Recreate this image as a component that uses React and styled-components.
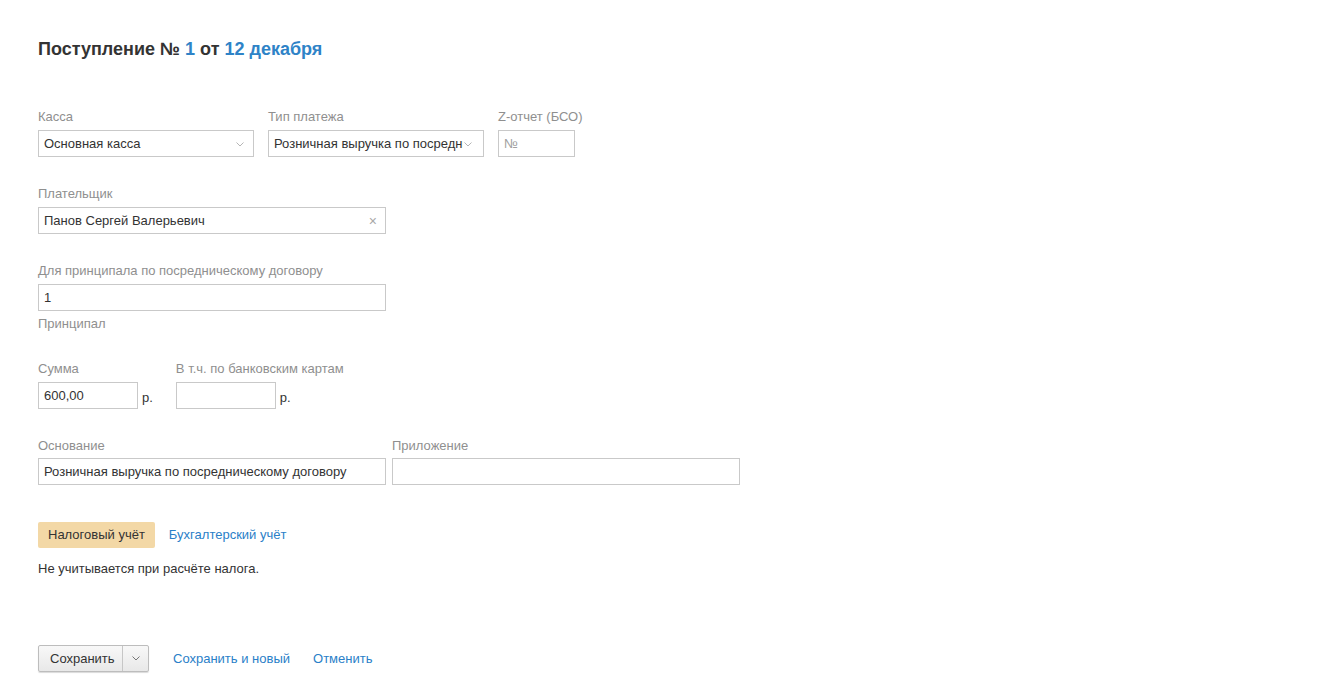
import React from "react";
import styled, { createGlobalStyle } from "styled-components";

const Global = createGlobalStyle`
  html, body { margin: 0; padding: 0; background: #fff; }
  body { font-family: "Liberation Sans", Arial, sans-serif; font-size: 13px; color: #333; }
  * { box-sizing: border-box; }
`;

const Page = styled.div`
  padding: 39px 38px 20px;
  display: flex;
  flex-direction: column;
`;

const Title = styled.h1`
  margin: 0 0 50px;
  font-size: 18px;
  line-height: 20px;
  font-weight: bold;
  color: #333;
`;

const Accent = styled.span`
  color: #2e83c7;
`;

const Row = styled.div`
  display: flex;
  align-items: flex-start;
  gap: ${(p) => p.$gap ?? 15}px;
  margin-bottom: ${(p) => p.$mb ?? 29}px;
`;

const Field = styled.div`
  display: flex;
  flex-direction: column;
  width: ${(p) => (p.$w ? `${p.$w}px` : "auto")};
  flex-shrink: 0;
`;

const Label = styled.div`
  color: #8f8f8f;
  font-size: 13px;
  line-height: 16px;
  margin-bottom: ${(p) => p.$mb ?? 5}px;
  white-space: nowrap;
`;

const Box = styled.div`
  position: relative;
  flex-shrink: 0;
  height: 27px;
  width: ${(p) => (p.$w ? `${p.$w}px` : "100%")};
  border: 1px solid #c9c9c9;
  background: #fff;
  display: flex;
  align-items: center;
  padding: 0 ${(p) => p.$pr ?? 5}px 0 5px;
  color: ${(p) => (p.$placeholder ? "#a0a0a0" : "#333")};
  font-size: 13px;
  white-space: nowrap;
  overflow: hidden;
`;

const BoxText = styled.span`
  flex: 1;
  overflow: hidden;
  white-space: nowrap;
`;

const Chevron = styled.svg`
  position: absolute;
  right: ${(p) => p.$r ?? 9}px;
  top: 11px;
`;

const Clear = styled.span`
  position: absolute;
  right: 8px;
  top: 5px;
  color: #a8a8a8;
  font-size: 14px;
`;

const Hint = styled.div`
  color: #8f8f8f;
  line-height: 16px;
  margin-top: 5px;
`;

const Money = styled.div`
  display: flex;
  align-items: flex-end;
  gap: 4px;
`;

const Unit = styled.span`
  line-height: 16px;
  padding-bottom: 3px;
  color: #333;
`;

const Tabs = styled.div`
  display: flex;
  align-items: center;
  gap: 14px;
  margin-top: 7px;
`;

const Tab = styled.div`
  height: 26px;
  line-height: 26px;
  padding: 0 10px;
  border-radius: 2px;
  background: ${(p) => (p.$active ? "#f3d8a6" : "transparent")};
  color: ${(p) => (p.$active ? "#333" : "#2a80c8")};
  padding-left: ${(p) => (p.$active ? 10 : 0)}px;
`;

const Note = styled.div`
  margin-top: 13px;
  line-height: 16px;
  color: #333;
`;

const Actions = styled.div`
  display: flex;
  align-items: center;
  gap: 23px;
  margin-top: 68px;
`;

const Split = styled.div`
  display: flex;
  height: 27px;
  margin-right: 1px;
  border: 1px solid #bdbdbd;
  border-radius: 2px;
  background: linear-gradient(#f8f8f8, #e8e8e8);
  box-shadow: 0 1px 1px rgba(0, 0, 0, 0.15);
`;

const MainBtn = styled.div`
  padding: 0 11px;
  line-height: 25px;
  color: #333;
  border-right: 1px solid #c6c6c6;
  width: 84px;
`;

const ArrowBtn = styled.div`
  width: 25px;
  display: flex;
  align-items: center;
  justify-content: center;
`;

const Link = styled.a`
  color: #2a80c8;
  text-decoration: none;
`;

const Down = ({ r }) => (
  <Chevron $r={r} width="8" height="5" viewBox="0 0 8 5">
    <path d="M0.5 0.5 L4 4 L7.5 0.5" fill="none" stroke="#b5b5b5" strokeWidth="1" />
  </Chevron>
);

export default function App() {
  return (
    <>
      <Global />
      <Page>
        <Title>
          Поступление № <Accent>1</Accent> от <Accent>12 декабря</Accent>
        </Title>

        <Row $gap={14}>
          <Field $w={216}>
            <Label>Касса</Label>
            <Box $pr={20}>
              <BoxText>Основная касса</BoxText>
              <Down r={9} />
            </Box>
          </Field>
          <Field $w={216}>
            <Label>Тип платежа</Label>
            <Box $pr={20}>
              <BoxText>Розничная выручка по посредническому договору</BoxText>
              <Down r={11} />
            </Box>
          </Field>
          <Field $w={77}>
            <Label>Z-отчет (БСО)</Label>
            <Box $placeholder>№</Box>
          </Field>
        </Row>

        <Row>
          <Field $w={348}>
            <Label $mb={5}>Плательщик</Label>
            <Box $pr={20}>
              <BoxText>Панов Сергей Валерьевич</BoxText>
              <Clear>×</Clear>
            </Box>
          </Field>
        </Row>

        <Row>
          <Field $w={348}>
            <Label $mb={5}>Для принципала по посредническому договору</Label>
            <Box>1</Box>
            <Hint>Принципал</Hint>
          </Field>
        </Row>

        <Row $gap={23}>
          <Field>
            <Label $mb={5}>Сумма</Label>
            <Money>
              <Box $w={100}>600,00</Box>
              <Unit>р.</Unit>
            </Money>
          </Field>
          <Field>
            <Label $mb={5}>В т.ч. по банковским картам</Label>
            <Money>
              <Box $w={100} />
              <Unit>р.</Unit>
            </Money>
          </Field>
        </Row>

        <Row $gap={6} $mb={30}>
          <Field $w={348}>
            <Label $mb={4}>Основание</Label>
            <Box>Розничная выручка по посредническому договору</Box>
          </Field>
          <Field $w={348}>
            <Label $mb={4}>Приложение</Label>
            <Box />
          </Field>
        </Row>

        <Tabs>
          <Tab $active>Налоговый учёт</Tab>
          <Tab>Бухгалтерский учёт</Tab>
        </Tabs>
        <Note>Не учитывается при расчёте налога.</Note>

        <Actions>
          <Split>
            <MainBtn>Сохранить</MainBtn>
            <ArrowBtn>
              <svg width="8" height="5" viewBox="0 0 8 5">
                <path d="M0.5 0.5 L4 4 L7.5 0.5" fill="none" stroke="#777" strokeWidth="1" />
              </svg>
            </ArrowBtn>
          </Split>
          <Link href="#">Сохранить и новый</Link>
          <Link href="#">Отменить</Link>
        </Actions>
      </Page>
    </>
  );
}
